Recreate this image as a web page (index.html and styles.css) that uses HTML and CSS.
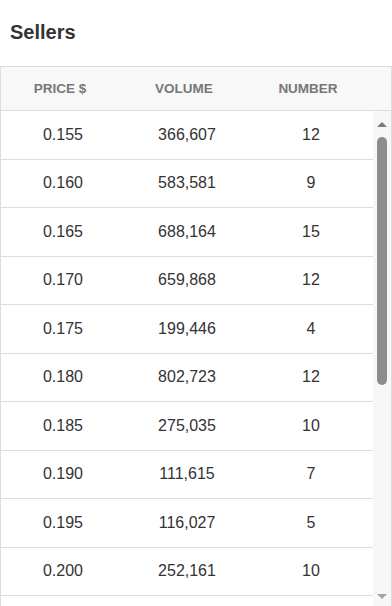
FILE: index.html
```html
<!DOCTYPE html>
<html>
<head>
<meta charset="utf-8">
<link rel="stylesheet" href="styles.css">
</head>
<body>
<div class="page">
  <h2 class="title">Sellers</h2>
  <div class="panel">
    <div class="head">
      <div class="hcell">PRICE $</div>
      <div class="hcell">VOLUME</div>
      <div class="hcell">NUMBER</div>
      <div class="hpad"></div>
    </div>
    <div class="bodywrap">
      <div class="rows">
        <div class="row"><div>0.155</div><div>366,607</div><div>12</div></div>
        <div class="row"><div>0.160</div><div>583,581</div><div>9</div></div>
        <div class="row"><div>0.165</div><div>688,164</div><div>15</div></div>
        <div class="row"><div>0.170</div><div>659,868</div><div>12</div></div>
        <div class="row"><div>0.175</div><div>199,446</div><div>4</div></div>
        <div class="row"><div>0.180</div><div>802,723</div><div>12</div></div>
        <div class="row"><div>0.185</div><div>275,035</div><div>10</div></div>
        <div class="row"><div>0.190</div><div>111,615</div><div>7</div></div>
        <div class="row"><div>0.195</div><div>116,027</div><div>5</div></div>
        <div class="row"><div>0.200</div><div>252,161</div><div>10</div></div>
      </div>
      <div class="scrollbar">
        <div class="sbtn"><span class="arrow-up"></span></div>
        <div class="thumb"></div>
        <div class="track-rest"></div>
        <div class="sbtn sbtn-down"><span class="arrow-down"></span></div>
      </div>
    </div>
  </div>
</div>
</body>
</html>
```

FILE: styles.css
```css
html, body {
  margin: 0;
  padding: 0;
  background: #fff;
}
body {
  font-family: "Liberation Sans", Arial, sans-serif;
  color: #333;
  width: 392px;
  height: 606px;
  overflow: hidden;
}
.page {
  display: flex;
  flex-direction: column;
}
.title {
  box-sizing: border-box;
  height: 66px;
  margin: 0;
  padding: 20px 10px 0;
  font-size: 20px;
  line-height: 24px;
  font-weight: bold;
  color: #333;
}
.panel {
  border: 1px solid #ddd;
  border-bottom: none;
  display: flex;
  flex-direction: column;
}
.head {
  display: grid;
  grid-template-columns: 1fr 1fr 1fr 18px;
  height: 43px;
  background: #f8f8f8;
  border-bottom: 1px solid #ddd;
  align-items: center;
}
.hcell {
  text-align: center;
  padding-right: 6px;
  font-size: 13.5px;
  font-weight: bold;
  color: #777;
}
.bodywrap {
  display: flex;
  height: 495px;
  overflow: hidden;
}
.rows {
  flex: 1;
  overflow: hidden;
}
.row {
  box-sizing: border-box;
  height: 48.5px;
  display: grid;
  grid-template-columns: 1fr 1fr 1fr;
  align-items: center;
  border-bottom: 1px solid #ddd;
  font-size: 16px;
  color: #333;
}
.row > div {
  text-align: center;
}
.scrollbar {
  width: 18px;
  background: #f7f7f7;
  display: flex;
  flex-direction: column;
  align-items: center;
}
.sbtn {
  height: 26px;
  width: 100%;
  display: flex;
  align-items: center;
  justify-content: center;
  flex: none;
}
.sbtn-down {
  height: 20px;
}
.arrow-up {
  width: 0;
  height: 0;
  border-left: 5px solid transparent;
  border-right: 5px solid transparent;
  border-bottom: 5px solid #7a7a7a;
  margin-left: -1px;
}
.arrow-down {
  width: 0;
  height: 0;
  border-left: 5px solid transparent;
  border-right: 5px solid transparent;
  border-top: 5px solid #a3a3a3;
  margin-left: -1px;
}
.thumb {
  width: 10px;
  height: 248px;
  background: #8c8c8c;
  border-radius: 5px;
  flex: none;
  margin-left: -1px;
}
.track-rest {
  flex: 1;
}
```
